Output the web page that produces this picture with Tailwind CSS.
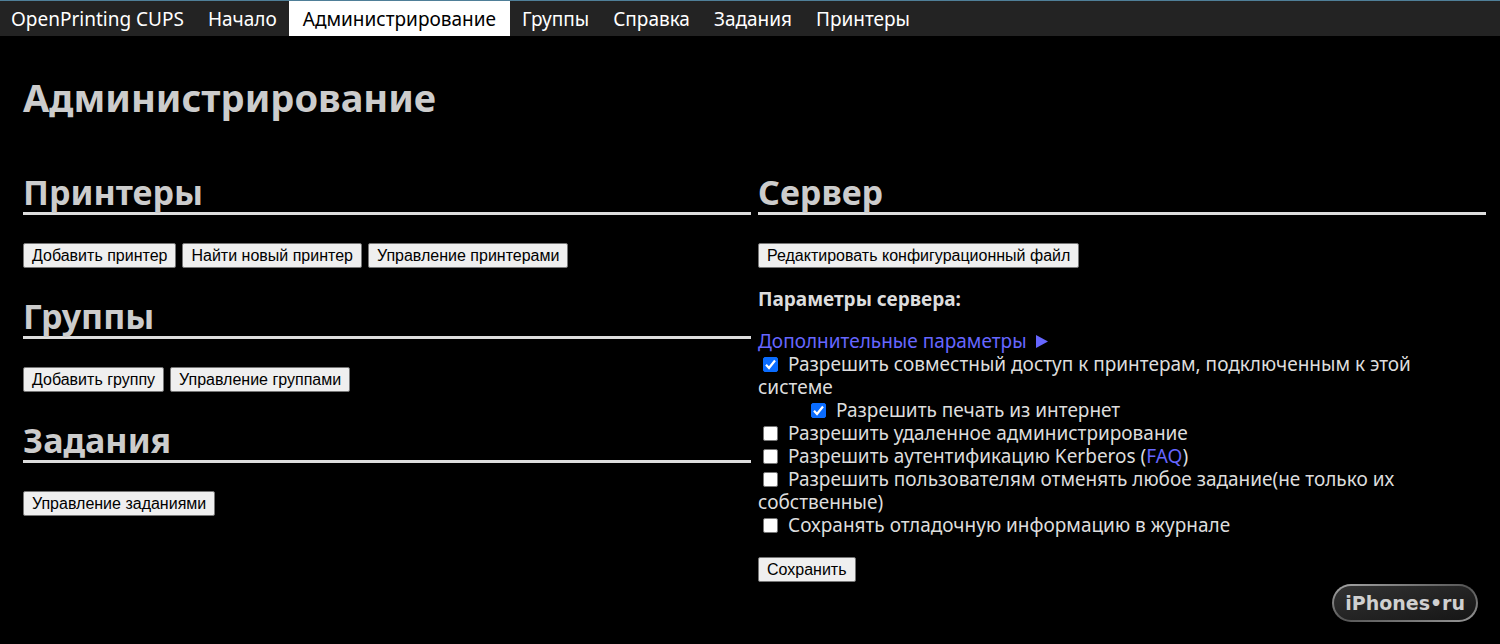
<!DOCTYPE html>
<html lang="ru">
<head>
<meta charset="utf-8">
<meta name="viewport" content="width=device-width, initial-scale=1">
<title>Администрирование - OpenPrinting CUPS</title>
<script src="https://cdn.jsdelivr.net/npm/@tailwindcss/browser@4"></script>
</head>
<body class="relative min-h-screen bg-black font-['Noto_Sans','Open_Sans',sans-serif] text-[19px] leading-[23px] text-[#dddddd]">
<nav class="flex flex-wrap border-t border-[#4f7f98] bg-[#232323] text-[19px] leading-[34px] text-white">
  <a href="#" class="pt-px pr-3 pl-[11px]">OpenPrinting CUPS</a>
  <a href="#" class="px-3 pt-px">Начало</a>
  <a href="#" class="bg-white px-3.5 pt-px text-black" aria-current="page">Администрирование</a>
  <a href="#" class="px-3 pt-px">Группы</a>
  <a href="#" class="px-3 pt-px">Справка</a>
  <a href="#" class="px-3 pt-px">Задания</a>
  <a href="#" class="px-3 pt-px">Принтеры</a>
</nav>
<main class="pt-[39px] pr-[14px] pl-[23px]">
  <h1 class="text-[38px] leading-[44px] font-bold text-[#cccccc]">Администрирование</h1>
  <div class="mt-[53px] grid grid-cols-2 gap-[7px]">
    <div class="flex flex-col gap-7">
      <section>
        <h2 class="border-b-3 border-[#dddddd] text-[34px] leading-[40px] font-bold text-[#cccccc]">Принтеры</h2>
        <div class="mt-7 flex flex-wrap gap-[6px] font-['Liberation_Sans',Arial,sans-serif] text-[16px] leading-[23px] text-black">
          <button class="rounded-[2px] border border-[#767676] bg-[#efefef] px-2">Добавить принтер</button>
          <button class="rounded-[2px] border border-[#767676] bg-[#efefef] px-2">Найти новый принтер</button>
          <button class="rounded-[2px] border border-[#767676] bg-[#efefef] px-2">Управление принтерами</button>
        </div>
      </section>
      <section>
        <h2 class="border-b-3 border-[#dddddd] text-[34px] leading-[40px] font-bold text-[#cccccc]">Группы</h2>
        <div class="mt-7 flex flex-wrap gap-[6px] font-['Liberation_Sans',Arial,sans-serif] text-[16px] leading-[23px] text-black">
          <button class="rounded-[2px] border border-[#767676] bg-[#efefef] px-2">Добавить группу</button>
          <button class="rounded-[2px] border border-[#767676] bg-[#efefef] px-2">Управление группами</button>
        </div>
      </section>
      <section>
        <h2 class="border-b-3 border-[#dddddd] text-[34px] leading-[40px] font-bold text-[#cccccc]">Задания</h2>
        <div class="mt-7 flex flex-wrap gap-[6px] font-['Liberation_Sans',Arial,sans-serif] text-[16px] leading-[23px] text-black">
          <button class="rounded-[2px] border border-[#767676] bg-[#efefef] px-2">Управление заданиями</button>
        </div>
      </section>
    </div>
    <section>
      <h2 class="border-b-3 border-[#dddddd] text-[34px] leading-[40px] font-bold text-[#cccccc]">Сервер</h2>
      <div class="mt-7 flex font-['Liberation_Sans',Arial,sans-serif] text-[16px] leading-[23px] text-black">
        <button class="rounded-[2px] border border-[#767676] bg-[#efefef] px-2">Редактировать конфигурационный файл</button>
      </div>
      <form>
        <p class="mt-5 font-bold">Параметры сервера:</p>
        <p class="mt-[19px]"><a href="#" class="text-[#6666ff]">Дополнительные параметры <svg class="ml-1 inline-block h-[13px] w-3 align-baseline" viewBox="0 0 12 13" fill="currentColor" aria-hidden="true"><path d="M0 0L12 6.500L0 13Z"/></svg></a></p>
        <div>
          <span class="mr-[10px] ml-[5px] inline-grid align-[-1px]"><input id="share" type="checkbox" checked class="peer col-start-1 row-start-1 size-[15px] appearance-none rounded-[2px] border border-[#767676] bg-white checked:border-[#0a6cff] checked:bg-[#0a6cff]"><svg class="pointer-events-none invisible col-start-1 row-start-1 size-[15px] peer-checked:visible" viewBox="0 0 15 15" fill="none" stroke="#fff" stroke-width="2.200" aria-hidden="true"><path d="M3 7.800L6 11L12 3.500"/></svg></span><label for="share">Разрешить совместный доступ к принтерам, подключенным к этой системе</label>
        </div>
        <div class="pl-12">
          <span class="mr-[10px] ml-[5px] inline-grid align-[-1px]"><input id="remote-any" type="checkbox" checked class="peer col-start-1 row-start-1 size-[15px] appearance-none rounded-[2px] border border-[#767676] bg-white checked:border-[#0a6cff] checked:bg-[#0a6cff]"><svg class="pointer-events-none invisible col-start-1 row-start-1 size-[15px] peer-checked:visible" viewBox="0 0 15 15" fill="none" stroke="#fff" stroke-width="2.200" aria-hidden="true"><path d="M3 7.800L6 11L12 3.500"/></svg></span><label for="remote-any">Разрешить печать из интернет</label>
        </div>
        <div>
          <span class="mr-[10px] ml-[5px] inline-grid align-[-1px]"><input id="remote-admin" type="checkbox" class="peer col-start-1 row-start-1 size-[15px] appearance-none rounded-[2px] border border-[#767676] bg-white checked:border-[#0a6cff] checked:bg-[#0a6cff]"><svg class="pointer-events-none invisible col-start-1 row-start-1 size-[15px] peer-checked:visible" viewBox="0 0 15 15" fill="none" stroke="#fff" stroke-width="2.200" aria-hidden="true"><path d="M3 7.800L6 11L12 3.500"/></svg></span><label for="remote-admin">Разрешить удаленное администрирование</label>
        </div>
        <div>
          <span class="mr-[10px] ml-[5px] inline-grid align-[-1px]"><input id="kerberos" type="checkbox" class="peer col-start-1 row-start-1 size-[15px] appearance-none rounded-[2px] border border-[#767676] bg-white checked:border-[#0a6cff] checked:bg-[#0a6cff]"><svg class="pointer-events-none invisible col-start-1 row-start-1 size-[15px] peer-checked:visible" viewBox="0 0 15 15" fill="none" stroke="#fff" stroke-width="2.200" aria-hidden="true"><path d="M3 7.800L6 11L12 3.500"/></svg></span><label for="kerberos">Разрешить аутентификацию Kerberos</label> (<a href="#" class="text-[#6666ff]">FAQ</a>)
        </div>
        <div>
          <span class="mr-[10px] ml-[5px] inline-grid align-[-1px]"><input id="cancel-any" type="checkbox" class="peer col-start-1 row-start-1 size-[15px] appearance-none rounded-[2px] border border-[#767676] bg-white checked:border-[#0a6cff] checked:bg-[#0a6cff]"><svg class="pointer-events-none invisible col-start-1 row-start-1 size-[15px] peer-checked:visible" viewBox="0 0 15 15" fill="none" stroke="#fff" stroke-width="2.200" aria-hidden="true"><path d="M3 7.800L6 11L12 3.500"/></svg></span><label for="cancel-any">Разрешить пользователям отменять любое задание(не только их собственные)</label>
        </div>
        <div>
          <span class="mr-[10px] ml-[5px] inline-grid align-[-1px]"><input id="debug-log" type="checkbox" class="peer col-start-1 row-start-1 size-[15px] appearance-none rounded-[2px] border border-[#767676] bg-white checked:border-[#0a6cff] checked:bg-[#0a6cff]"><svg class="pointer-events-none invisible col-start-1 row-start-1 size-[15px] peer-checked:visible" viewBox="0 0 15 15" fill="none" stroke="#fff" stroke-width="2.200" aria-hidden="true"><path d="M3 7.800L6 11L12 3.500"/></svg></span><label for="debug-log">Сохранять отладочную информацию в журнале</label>
        </div>
        <div class="mt-5 flex font-['Liberation_Sans',Arial,sans-serif] text-[16px] leading-[23px] text-black">
          <button type="button" class="rounded-[2px] border border-[#767676] bg-[#efefef] px-2">Сохранить</button>
        </div>
      </form>
    </section>
  </div>
</main>
<div class="absolute right-[22px] bottom-[22px] rounded-full bg-linear-to-br from-[#aaaaaa] via-[#555555] to-[#999999] p-[2px]">
  <div class="rounded-full bg-linear-to-br from-[#333333] to-[#161616] px-[11px] font-['DejaVu_Sans',sans-serif] text-[19px] leading-[34px] font-bold text-[#d0d0d0]">iPhones•ru</div>
</div>
</body>
</html>
